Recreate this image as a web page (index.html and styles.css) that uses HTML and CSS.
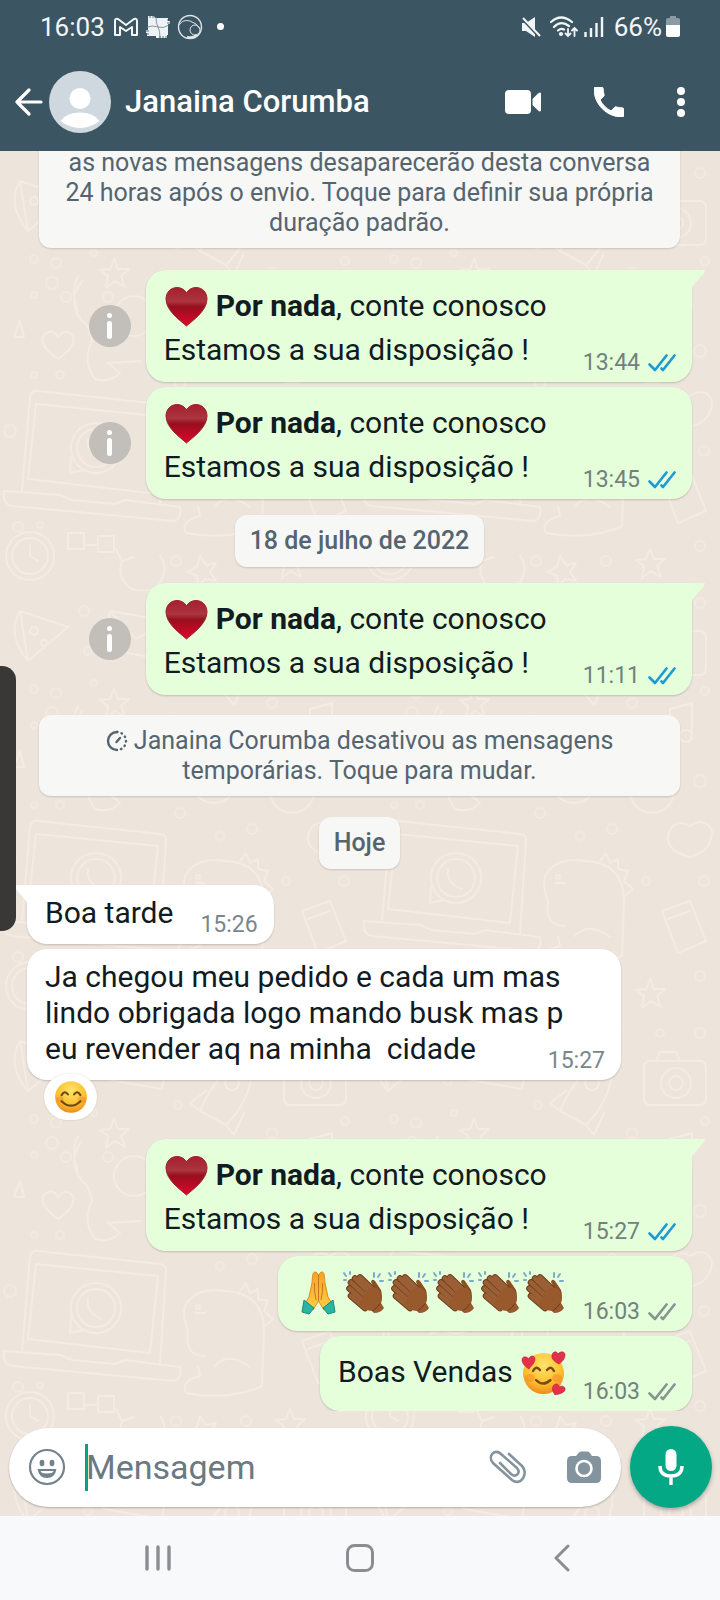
FILE: index.html
```html
<!DOCTYPE html>
<html lang="pt-BR">
<head>
    <meta charset="UTF-8">
    <meta name="viewport" content="width=device-width, initial-scale=1">
    <title>Janaina Corumba</title>
    <link rel="stylesheet" href="styles.css">
</head>
<body>
<!-- shared symbols: ticks and emoji -->
<svg class="defs" aria-hidden="true">
    <defs>
        <linearGradient id="heartFill" x1="0" y1="0" x2="0" y2="1">
            <stop offset="0" stop-color="#a61f2e"/>
            <stop offset="0.36" stop-color="#ab3540"/>
            <stop offset="0.5" stop-color="#970f1e"/>
            <stop offset="1" stop-color="#df062b"/>
        </linearGradient>
        <radialGradient id="faceFill" cx="0.5" cy="0.3" r="0.7">
            <stop offset="0" stop-color="#ffe36b"/>
            <stop offset="0.65" stop-color="#fcc02e"/>
            <stop offset="1" stop-color="#ef8a1c"/>
        </radialGradient>
        <linearGradient id="prayFill" x1="0" y1="0" x2="0" y2="1">
            <stop offset="0" stop-color="#f3a22a"/>
            <stop offset="1" stop-color="#ffd044"/>
        </linearGradient>
        <symbol id="ticks" viewBox="0 0 28 18">
            <path d="M1.500 10.500 L7 16 L18.500 1.500 M13.500 14.500 L15 16 L26.500 1.500" fill="none" stroke="currentColor" stroke-width="2.600" stroke-linecap="round" stroke-linejoin="round"/>
        </symbol>
        <symbol id="heart" viewBox="0 0 45 45">
            <path d="M22.500 42 C17 37 2 27 2 15 C2 8 7 3.500 13 3.500 C17.500 3.500 21 6 22.500 9 C24 6 27.500 3.500 32 3.500 C38 3.500 43 8 43 15 C43 27 28 37 22.500 42 Z" fill="url(#heartFill)" stroke="#9a2630" stroke-width="1"/>
        </symbol>
        <symbol id="pray" viewBox="0 0 45 45">
            <path d="M19 2 C16.500 2 16.500 7 16 13 L13 27 L9 34 L17 40 L22.500 31 L28 40 L36 34 L32 27 L29 13 C28.500 7 28.500 2 26 2 C24 2 23 4 22.500 6 C22 4 21 2 19 2 Z" fill="url(#prayFill)" stroke="#e08a1e" stroke-width="1"/>
            <path d="M22.500 5 V31 M18.500 13 Q18 22 20 30 M26.500 13 Q27 22 25 30" fill="none" stroke="#c9761a" stroke-width="1"/>
            <path d="M8 30 L18 38 L13 44 L6 42 Z M37 30 L27 38 L32 44 L39 42 Z" fill="#29b5a4" stroke="#15897f" stroke-width="1" stroke-linejoin="round"/>
        </symbol>
        <symbol id="clap" viewBox="0 0 45 45">
            <path d="M20 7 L32 16 L30 12 Q31 8 34 11 L40 20 Q42 27 40 33 L33 36 L18 20 Z" fill="#8a4f25"/>
            <g stroke="#6b3a1a" stroke-width="6.600" stroke-linecap="round">
                <path d="M19 7.500 L32 20"/>
                <path d="M14 8.500 L30 24"/>
                <path d="M10 12.500 L28 29"/>
                <path d="M8.500 18.500 L26 34"/>
                <path d="M10 26 L24 38"/>
            </g>
            <g stroke="#9a5f35" stroke-width="4.800" stroke-linecap="round">
                <path d="M19 7.500 L32 20"/>
                <path d="M14 8.500 L30 24"/>
                <path d="M10 12.500 L28 29"/>
                <path d="M8.500 18.500 L26 34"/>
                <path d="M10 26 L24 38"/>
            </g>
            <path d="M24 22 Q32 15 37 19 Q42 25 40 33 L43 38 Q40 43 33 43 L31 41 Q24 41 18 34 Z" fill="#98592c"/>
            <path d="M39 33.500 Q36 38 31.500 41" fill="none" stroke="#6b3a1a" stroke-width="1"/>
            <g stroke="#7fa9cc" stroke-width="2" stroke-linecap="round">
                <path d="M3 3 L5 6 M9 2 L9 4 M3 10 L5 10 M33 3 L33 7 M39 4 L37 7 M42 11 L39 11"/>
            </g>
        </symbol>
        <symbol id="smile" viewBox="0 0 45 45">
            <circle cx="22.500" cy="22.500" r="21" fill="url(#faceFill)"/>
            <ellipse cx="8" cy="26" rx="5" ry="4" fill="#f6852a" opacity="0.5"/>
            <ellipse cx="37" cy="26" rx="5" ry="4" fill="#f6852a" opacity="0.5"/>
            <path d="M10 20 Q14 13 18.500 19 M26.500 19 Q31 13 35 20 M10 28 Q22.500 40 35 28" fill="none" stroke="#6a4a17" stroke-width="2.800" stroke-linecap="round"/>
        </symbol>
        <symbol id="love" viewBox="0 0 45 45">
            <circle cx="22.500" cy="23.500" r="20.500" fill="url(#faceFill)"/>
            <ellipse cx="9" cy="28" rx="5" ry="4" fill="#f6852a" opacity="0.5"/>
            <ellipse cx="36" cy="28" rx="5" ry="4" fill="#f6852a" opacity="0.5"/>
            <path d="M12 21 Q15 15 19 20 M26 20 Q30 15 33 21 M15 30 Q22 37 29.500 30" fill="none" stroke="#7a4a14" stroke-width="2.400" stroke-linecap="round"/>
            <g fill="#e5304a" stroke="#b71c35" stroke-width="0.600">
                <path d="M8 19 C5 17 1 14 1 10 C1 6 6 6 7.500 9 C9 5 14 5 14 9 C14 13 10 16 8 19 Z"/>
                <path d="M38 14 C34 12 30 9 31 5 C32 1 36 1 37 4 C39 1 44 1 44 5 C44 9 41 12 38 14 Z"/>
                <path d="M34 45 C32 42 30 38 33 35 C35 33 38 34 38 37 C41 35 45 37 44 40 C43 43 38 44 34 45 Z"/>
            </g>
        </symbol>
    </defs>
</svg>

<div class="phone">
    <header class="top">
        <div class="status">
            <span class="status-time">16:03</span>
            <svg class="s-mail" viewBox="0 0 24 20" fill="none" stroke="#f3f6f8" stroke-width="2" stroke-linejoin="round"><path d="M1 4 Q1 1 4 2 L12 8 L20 2 Q23 1 23 4 V18 H18 V10 L12 14 L6 10 V18 H1 Z"/></svg>
            <svg class="s-grid" viewBox="0 0 24 24"><path d="M2 1 H8 L9 3 H22 V6 H24 V9 H22 V20 H21 V23 H10 V21 H1 V18 H0 V15 H2 Z" fill="#eef2f4"/><path d="M1 12 Q7 10 12 12 T23 10 M10 2 Q10 9 12 12 T14 23" fill="none" stroke="#6b808b" stroke-width="0.800"/><path d="M4 0 V3 M7 0 V3 M0 16 H3 M0 19 H3 M21 5 H24 M21 8 H24 M14 21 V24 M17 21 V24 M20 21 V24" stroke="#3b5562" stroke-width="0.800"/></svg>
            <svg class="s-orb" viewBox="0 0 26 26" fill="none" stroke="#dfe6ea" stroke-width="1.400"><circle cx="13" cy="13" r="11.500"/><path d="M2 11 Q6 5 13 7 Q20 9 23 15" stroke-width="1"/><circle cx="18" cy="16" r="5" stroke-width="1"/><path d="M10 23 Q15 25 20 21" stroke-width="2.600"/></svg>
            <span class="s-dot"></span>
            <span class="spacer"></span>
            <svg class="s-mute" viewBox="0 0 20 20"><path d="M1 6 H5 L14 0 V20 L5 14 H1 Z" fill="#f3f6f8"/><path d="M0 1 L18 20" stroke="#3b5562" stroke-width="2"/><path d="M2 1 L19 19" stroke="#f3f6f8" stroke-width="2"/></svg>
            <svg class="s-wifi" viewBox="0 0 28 22" fill="none" stroke="#f3f6f8" stroke-width="2.200" stroke-linecap="round"><path d="M1 6 Q11 -3 22 6 M4 11 Q11 4 19 10 M8 14.500 Q11 12 14 13.500"/><circle cx="11" cy="18" r="1" fill="#f3f6f8"/><path d="M18 13 V20 M15.500 17.500 L18 20 L20.500 17.500 M24.500 20 V12 M22 14.500 L24.500 12 L27 14.500" stroke-width="1.800"/></svg>
            <svg class="s-signal" viewBox="0 0 20 20" stroke="#f3f6f8" stroke-width="2.400"><path d="M1.500 15 V20 M7 11 V20 M12.500 6 V20 M18 0 V20"/></svg>
            <span class="status-pct">66%</span>
            <svg class="s-batt" viewBox="0 0 14 22"><path d="M4 0 H10 V2 H12 Q14 2 14 4 V10 H0 V4 Q0 2 2 2 H4 Z" fill="#8b9ba4"/><path d="M0 9 H14 V19 Q14 21 12 21 H2 Q0 21 0 19 Z" fill="#fff"/></svg>
        </div>
        <div class="appbar">
            <button class="icon-btn back" aria-label="Voltar">
                <svg width="28" height="28" viewBox="0 0 28 28" fill="none" stroke="#fff" stroke-width="3.200" stroke-linecap="round" stroke-linejoin="round"><path d="M26 14 H2 M14 2 L2 14 L14 26"/></svg>
            </button>
            <svg class="avatar" viewBox="0 0 62 62"><circle cx="31" cy="31" r="31" fill="#cfd8df"/><circle cx="31" cy="27.500" r="10.500" fill="#fff"/><path d="M11.500 50 Q17 41.500 31 41.500 Q45 41.500 50.500 50 A31 31 0 0 1 11.500 50 Z" fill="#fff"/></svg>
            <h1 class="contact">Janaina Corumba</h1>
            <div class="actions">
                <button class="icon-btn" aria-label="Chamada de vídeo">
                    <svg width="36" height="24" viewBox="0 0 36 24" fill="#fff"><rect width="26" height="24" rx="4"/><path d="M27.500 9 L33 3.500 Q36 1.500 36 4 V20 Q36 22.500 33 20.500 L27.500 15 Z"/></svg>
                </button>
                <button class="icon-btn" aria-label="Ligar">
                    <svg width="30" height="30" viewBox="3 3 18 18" fill="#fff" stroke="#fff" stroke-width="0.600"><path d="M6.620 10.790c1.440 2.830 3.760 5.140 6.590 6.590l2.200-2.200c.27-.27.67-.36 1.020-.24 1.120.37 2.330.57 3.570.57.55 0 1 .45 1 1V20c0 .55-.45 1-1 1-9.390 0-17-7.610-17-17 0-.55.45-1 1-1h3.500c.55 0 1 .45 1 1 0 1.250.2 2.450.57 3.570.11.35.03.74-.25 1.020l-2.200 2.200z"/></svg>
                </button>
                <button class="icon-btn" aria-label="Mais opções">
                    <svg width="8" height="30" viewBox="0 0 8 30" fill="#fff"><circle cx="4" cy="4" r="4"/><circle cx="4" cy="15" r="4"/><circle cx="4" cy="26" r="4"/></svg>
                </button>
            </div>
        </div>
    </header>

    <div class="conversation">
        <svg class="wallpaper" aria-hidden="true">
            <defs>
                <pattern id="doodles" y="10" width="360" height="430" patternUnits="userSpaceOnUse">
                    <g fill="none" stroke="#f4ebe3" stroke-width="2" stroke-linecap="round" stroke-linejoin="round">
                        <!-- laptop -->
                        <path d="M30 236 Q31 229 38 230 L160 243 Q167 244 166 251 L160 342 M30 236 L22 330 M36 243 L158 255 L150 332 L28 318 Z M4 330 L60 334 L72 339 L115 343 L125 339 L180 346 Q182 358 174 360 L12 345 Q2 343 4 330 Z"/>
                        <circle cx="96" cy="287" r="25"/><circle cx="96" cy="287" r="19"/><path d="M88 278 Q86 292 102 298 M71 296 L70 312 L84 309"/>
                        <!-- dino -->
                        <path d="M205 335 Q184 335 188 310 Q180 290 188 280 Q200 266 225 270 Q264 272 264 310 L262 365 Q230 380 186 372 Q180 360 200 355 L198 345 M205 292 L196 292 M240 270 L246 262 L250 272 L258 268 L258 278 L268 280 L264 290 L273 298 L265 305"/><circle cx="198" cy="286" r="2"/><path d="M215 345 Q228 330 250 346"/>
                        <!-- cat -->
                        <path d="M82 120 Q66 140 82 160 Q90 165 92 180 Q82 200 95 218 Q110 222 120 212 L108 202 L140 200 M78 115 Q70 130 78 150"/><circle cx="134" cy="155" r="20"/>
                        <!-- camera -->
                        <rect x="284" y="40" width="62" height="44" rx="6"/><circle cx="316" cy="62" r="15"/><circle cx="316" cy="62" r="7"/><path d="M296 40 L300 31 H316 L320 40"/>
                        <!-- bicycle -->
                        <circle cx="214" cy="190" r="22"/><circle cx="292" cy="200" r="22"/><path d="M214 190 L234 154 L276 160 L292 200 M234 154 L250 192 L276 160 M214 190 L250 192 M228 150 H242 M270 152 L286 154"/>
                        <!-- pizza, envelope, rocket, notes -->
                        <path d="M20 20 L68 36 L28 70 Z M20 20 Q6 44 28 70"/><circle cx="34" cy="40" r="4"/><circle cx="44" cy="52" r="3"/>
                        <path d="M110 20 L168 30 L162 68 L104 58 Z M110 20 L136 48 L168 30"/>
                        <path d="M200 90 Q216 50 252 34 Q256 74 226 104 Z M200 90 L190 82 L206 70 M226 104 L234 114 L244 92"/><circle cx="232" cy="62" r="7"/>
                        <path d="M310 118 V150 M310 118 L332 112 V144"/><circle cx="304" cy="151" r="6"/><circle cx="326" cy="145" r="6"/>
                        <!-- clocks -->
                        <circle cx="30" cy="395" r="24"/><circle cx="30" cy="395" r="18"/><path d="M30 384 V395 L38 400"/>
                        <path d="M122 400 A22 22 0 1 0 160 395 M122 400 L116 388 M122 400 L134 396"/>
                        <rect x="68" y="372" width="16" height="16"/><rect x="98" y="375" width="16" height="16"/><path d="M84 384 H98"/>
                        <path d="M330 235 Q345 225 352 240 Q352 260 330 266 Q306 260 308 244 Q314 226 330 235 Z M302 320 L330 310 L346 350 L318 362 Z M308 328 L330 320"/>
                        <!-- hearts -->
                        <path d="M58 198 Q38 184 44 174 Q52 166 58 176 Q66 166 73 175 Q76 186 58 198 Z M250 18 Q236 8 240 2 Q246 -2 250 5 Q256 -2 260 3 Q262 10 250 18 Z M180 142 Q166 132 170 126 Q176 122 180 129 Q186 122 190 127 Q192 134 180 142 Z"/>
                        <!-- stars -->
                        <path d="M114 98 L118 108 L129 108 L121 115 L125 126 L115 120 L106 127 L108 115 L100 109 L110 108 Z M290 388 L294 398 L305 398 L297 405 L301 416 L291 410 L282 417 L284 405 L276 399 L286 398 Z M20 160 L24 176 L14 176 Z M200 395 L206 404 L216 402 L210 411 L216 420 L205 418 L198 426 L197 415 L187 411 L197 406 Z"/>
                    </g>
                    <g fill="none" stroke="#f3e9df" stroke-width="2">
                        <circle cx="34" cy="98" r="4"/><circle cx="56" cy="102" r="5"/><circle cx="52" cy="122" r="6"/><circle cx="34" cy="134" r="3"/><circle cx="66" cy="136" r="5"/><circle cx="94" cy="92" r="3"/><circle cx="108" cy="136" r="5"/><circle cx="34" cy="214" r="3"/><circle cx="60" cy="214" r="4"/><circle cx="18" cy="366" r="5"/><circle cx="40" cy="364" r="3"/><circle cx="176" cy="400" r="5"/><circle cx="84" cy="20" r="5"/><circle cx="88" cy="60" r="4"/><circle cx="190" cy="20" r="6"/><circle cx="178" cy="84" r="4"/><circle cx="272" cy="112" r="5"/><circle cx="345" cy="100" r="4"/><circle cx="340" cy="190" r="6"/><circle cx="252" cy="238" r="5"/><circle cx="220" cy="245" r="4"/><circle cx="286" cy="290" r="4"/><circle cx="344" cy="290" r="5"/><circle cx="340" cy="385" r="5"/><circle cx="246" cy="400" r="5"/><circle cx="10" cy="270" r="6"/><circle cx="180" cy="222" r="5"/><circle cx="340" cy="12" r="5"/><circle cx="300" cy="12" r="4"/>
                    </g>
                </pattern>
            </defs>
            <rect width="100%" height="100%" fill="url(#doodles)"/>
        </svg>

        <main class="chat">
            <div class="notice">as novas mensagens desaparecerão desta conversa 24 horas após o envio. Toque para definir sua própria duração padrão.</div>

            <div class="row sent first">
                <button class="info" aria-label="Informações"></button>
                <div class="bubble tail">
                    <div class="text">
                        <p class="line"><svg class="emoji"><use href="#heart"/></svg><span class="after"><b>Por nada</b>, conte conosco</span></p>
                        <p>Estamos a sua disposição !</p>
                    </div>
                    <span class="meta">13:44 <svg class="ticks read"><use href="#ticks"/></svg></span>
                </div>
            </div>
            <div class="row sent">
                <button class="info" aria-label="Informações"></button>
                <div class="bubble">
                    <div class="text">
                        <p class="line"><svg class="emoji"><use href="#heart"/></svg><span class="after"><b>Por nada</b>, conte conosco</span></p>
                        <p>Estamos a sua disposição !</p>
                    </div>
                    <span class="meta">13:45 <svg class="ticks read"><use href="#ticks"/></svg></span>
                </div>
            </div>

            <div class="date">18 de julho de 2022</div>

            <div class="row sent first">
                <button class="info" aria-label="Informações"></button>
                <div class="bubble tail">
                    <div class="text">
                        <p class="line"><svg class="emoji"><use href="#heart"/></svg><span class="after"><b>Por nada</b>, conte conosco</span></p>
                        <p>Estamos a sua disposição !</p>
                    </div>
                    <span class="meta">11:11 <svg class="ticks read"><use href="#ticks"/></svg></span>
                </div>
            </div>

            <div class="notice spaced"><svg class="timer" viewBox="0 0 22 22" fill="none" stroke="#54656f" stroke-width="2.400" stroke-linecap="round"><path d="M11 2 A9 9 0 0 0 11 20"/><path d="M11 2 A9 9 0 0 1 11 20" stroke-dasharray="0.500 4.200"/><path d="M10.500 12 L14 8"/></svg> Janaina Corumba desativou as mensagens temporárias. Toque para mudar.</div>

            <div class="date today">Hoje</div>

            <div class="row received first">
                <div class="bubble tail">
                    <p class="text">Boa tarde</p>
                    <span class="meta">15:26</span>
                </div>
            </div>
            <div class="row received reacted">
                <div class="bubble long">
                    <p class="words">Ja chegou meu pedido e cada um mas lindo obrigada logo mando busk mas p eu revender aq na minha&nbsp; cidade<span class="meta">15:27</span></p>
                    <button class="reaction" aria-label="Reação"><svg><use href="#smile"/></svg></button>
                </div>
            </div>

            <div class="row sent">
                <div class="bubble tail">
                    <div class="text">
                        <p class="line"><svg class="emoji"><use href="#heart"/></svg><span class="after"><b>Por nada</b>, conte conosco</span></p>
                        <p>Estamos a sua disposição !</p>
                    </div>
                    <span class="meta">15:27 <svg class="ticks read"><use href="#ticks"/></svg></span>
                </div>
            </div>
            <div class="row sent">
                <div class="bubble">
                    <p class="line"><svg class="emoji"><use href="#pray"/></svg><svg class="emoji"><use href="#clap"/></svg><svg class="emoji"><use href="#clap"/></svg><svg class="emoji"><use href="#clap"/></svg><svg class="emoji"><use href="#clap"/></svg><svg class="emoji"><use href="#clap"/></svg></p>
                    <span class="meta">16:03 <svg class="ticks"><use href="#ticks"/></svg></span>
                </div>
            </div>
            <div class="row sent">
                <div class="bubble">
                    <p class="line"><span class="before">Boas Vendas</span><svg class="emoji"><use href="#love"/></svg></p>
                    <span class="meta">16:03 <svg class="ticks"><use href="#ticks"/></svg></span>
                </div>
            </div>
        </main>

        <form class="composer">
            <div class="field">
                <button type="button" class="icon-btn" aria-label="Emoji">
                    <svg width="38" height="38" viewBox="0 0 38 38"><circle cx="19" cy="19" r="17" fill="none" stroke="#72838d" stroke-width="2.200"/><ellipse cx="14" cy="15" rx="2.400" ry="3.200" fill="#72838d"/><ellipse cx="24" cy="15" rx="2.400" ry="3.200" fill="#72838d"/><path d="M9.500 21 H28.500 Q27 30 19 30 Q11 30 9.500 21 Z" fill="#72838d"/><path d="M12.500 23 H25.500 Q25 25.500 19 25.500 Q13 25.500 12.500 23 Z" fill="#fff"/></svg>
                </button>
                <span class="caret"></span>
                <input class="message" type="text" placeholder="Mensagem" aria-label="Mensagem">
                <button type="button" class="icon-btn" aria-label="Anexar">
                    <svg width="38" height="34" viewBox="0 0 38 34" fill="none" stroke="#84939c" stroke-width="2.600" stroke-linecap="round" stroke-linejoin="round"><path d="M20 4 L33 16 C40 23 32 37 23 30 L4 13 C-2 6 6 -2 12 4 L28 18 C32 23 27 28 22 24 L11 13"/></svg>
                </button>
                <button type="button" class="icon-btn" aria-label="Câmera">
                    <svg width="34" height="32" viewBox="0 0 34 32"><path d="M5 5 H9 L12 1.500 Q13 0.500 14.500 0.500 H20 Q21.500 0.500 22.500 1.500 L25 5 H29 Q34 5 34 10 V27 Q34 32 29 32 H5 Q0 32 0 27 V10 Q0 5 5 5 Z" fill="#84949f"/><circle cx="17" cy="17.500" r="7.500" fill="none" stroke="#fff" stroke-width="2.600"/></svg>
                </button>
            </div>
            <button type="button" class="mic" aria-label="Gravar áudio">
                <svg width="26" height="36" viewBox="0 0 26 36"><rect x="7.500" y="0" width="11" height="22" rx="5.500" fill="#fff"/><path d="M2 17 Q2 27 13 27 Q24 27 24 17 M13 27 V36" fill="none" stroke="#fff" stroke-width="3.400"/></svg>
            </button>
        </form>
    </div>

    <nav class="sysnav">
        <button aria-label="Recentes"><svg width="26" height="26" viewBox="0 0 26 26" stroke="#8b8d90" stroke-width="3.400" stroke-linecap="round"><path d="M2 2 V24 M13 2 V24 M24 2 V24"/></svg></button>
        <button aria-label="Início"><svg width="28" height="28" viewBox="0 0 28 28" fill="none" stroke="#8b8d90" stroke-width="3"><rect x="1.500" y="1.500" width="25" height="25" rx="7"/></svg></button>
        <button aria-label="Voltar"><svg width="16" height="28" viewBox="0 0 16 28" fill="none" stroke="#8b8d90" stroke-width="3" stroke-linecap="round" stroke-linejoin="round"><path d="M14 2 L2 14 L14 26"/></svg></button>
    </nav>
    <div class="edge-handle"></div>
</div>
</body>
</html>
```
FILE: styles.css
```css
* {
    box-sizing: border-box;
}

body {
    margin: 0;
    font-family: Roboto, "Noto Sans", sans-serif;
    color: #111b21;
}

p, h1 {
    margin: 0;
}

button {
    padding: 0;
    border: 0;
    background: none;
    display: flex;
    align-items: center;
    justify-content: center;
}

svg {
    display: block;
    flex-shrink: 0;
}

.defs {
    position: absolute;
    width: 0;
    height: 0;
}

.phone {
    position: relative;
    display: flex;
    flex-direction: column;
    height: 100vh;
    overflow: hidden;
}

/* header */
.top {
    background: #3b5562;
    color: #fff;
}

.status {
    display: flex;
    align-items: center;
    height: 53px;
    padding: 0 40px;
    font-size: 26px;
    line-height: 30px;
    color: #f3f6f8;
}

.spacer {
    flex: 1;
}

.s-mail { width: 24px; height: 20px; margin-left: 9px; }
.s-grid { width: 24px; height: 24px; margin-left: 8px; }
.s-orb { width: 26px; height: 26px; margin-left: 7px; }
.s-dot { width: 7px; height: 7px; margin-left: 14px; border-radius: 50%; background: #fff; }
.s-mute { width: 20px; height: 20px; }
.s-wifi { width: 28px; height: 22px; margin-left: 9px; }
.s-signal { width: 20px; height: 20px; margin: 0 10px 0 6px; }
.s-batt { width: 14px; height: 22px; margin-left: 4px; }

.appbar {
    display: flex;
    align-items: center;
    height: 98px;
    padding: 0 35px 0 15px;
}

.avatar {
    width: 62px;
    height: 62px;
    margin-left: 6px;
}

.contact {
    flex: 1;
    margin-left: 14px;
    font-size: 31px;
    line-height: 36px;
    font-weight: 500;
}

.actions {
    display: flex;
    align-items: center;
    gap: 53px;
}

/* conversation */
.conversation {
    position: relative;
    flex: 1;
    min-height: 0;
    display: flex;
    flex-direction: column;
    background: #ede4dc;
}

.wallpaper {
    position: absolute;
    top: 0;
    left: 0;
    width: 100%;
    height: 100%;
}

.chat {
    position: relative;
    flex: 1;
    min-height: 0;
    display: flex;
    flex-direction: column;
    justify-content: flex-end;
    overflow: hidden;
    padding: 0 28px 0 27px;
}

.notice, .date {
    flex-shrink: 0;
    background: #f7f7f6;
    color: #54656f;
    font-size: 25px;
    text-align: center;
    border-radius: 12px;
    box-shadow: 0 1px 2px rgba(0, 0, 0, 0.15);
}

.notice {
    margin: 0 12px;
    padding: 10px 24px;
    line-height: 30px;
}

.notice.spaced {
    margin-top: 20px;
    padding: 11px 60px 10px;
}

.timer {
    display: inline-block;
    width: 22px;
    height: 22px;
    vertical-align: -3px;
}

.date {
    align-self: center;
    margin-top: 16px;
    padding: 12px 15px;
    line-height: 28px;
    font-weight: 500;
}

.date.today {
    margin-top: 21px;
}

.row {
    flex-shrink: 0;
    display: flex;
    align-items: center;
    margin-top: 5px;
}

.row.first {
    margin-top: 16px;
}

.notice + .row.first {
    margin-top: 22px;
}

.row.sent {
    justify-content: flex-end;
}

.row.reacted {
    margin-bottom: 54px;
}

.info {
    width: 42px;
    height: 42px;
    margin-right: 15px;
    flex-direction: column;
    gap: 3px;
    border-radius: 50%;
    background: #c2bfba;
}

.info::before {
    content: "";
    width: 5px;
    height: 5px;
    border-radius: 50%;
    background: #fff;
}

.info::after {
    content: "";
    width: 5px;
    height: 18px;
    border-radius: 3px;
    background: #fff;
}

.bubble {
    position: relative;
    display: flex;
    align-items: flex-end;
    gap: 17px;
    padding: 10px 16px 13px 18px;
    border-radius: 20px;
    background: #fff;
    font-size: 30px;
    line-height: 36px;
    box-shadow: 0 1px 2px rgba(0, 0, 0, 0.18);
}

.sent .bubble {
    background: #e5ffda;
}

.sent .tail {
    border-top-right-radius: 0;
}

.received .tail {
    border-top-left-radius: 0;
}

.tail::before {
    content: "";
    position: absolute;
    top: 0;
    width: 13px;
    height: 18px;
}

.sent .tail::before {
    left: 100%;
    background: #e5ffda;
    clip-path: polygon(0 0, 100% 0, 90% 20%, 10% 85%, 0 100%);
}

.received .tail::before {
    right: 100%;
    background: #fff;
    clip-path: polygon(100% 0, 0 0, 10% 20%, 90% 85%, 100% 100%);
}

.text {
    padding-right: 10px;
}

.sent .text {
    padding: 0 19px 1px 0;
}

.line {
    display: flex;
    align-items: center;
    min-height: 52px;
}

.after {
    margin-left: 7px;
}

.before {
    margin-right: 8px;
}

.emoji {
    width: 45px;
    height: 45px;
}

.meta {
    display: flex;
    align-items: center;
    gap: 8px;
    margin-bottom: -6px;
    font-size: 23px;
    line-height: 24px;
    color: #71827c;
}

.received .meta {
    color: #7a868d;
}

.ticks {
    width: 28px;
    height: 18px;
    color: #85958f;
}

.ticks.read {
    color: #1c9ad6;
}

.long {
    display: block;
    max-width: 594px;
}

/* keeps the words clear of the time in the corner */
.words {
    padding-right: 24px;
}

.long .meta {
    float: right;
    margin: 18px -24px -12px 0;
}

.reaction {
    position: absolute;
    left: 17px;
    top: 100%;
    margin-top: -6px;
    width: 53px;
    height: 46px;
    border-radius: 23px;
    background: #fff;
    box-shadow: 0 0 2px rgba(0, 0, 0, 0.15);
}

.reaction svg {
    width: 34px;
    height: 34px;
}

/* composer */
.composer {
    position: relative;
    display: flex;
    align-items: center;
    gap: 9px;
    padding: 15px 8px 8px 9px;
}

.field {
    flex: 1;
    min-width: 0;
    display: flex;
    align-items: center;
    height: 79px;
    padding: 0 20px 0 19px;
    border-radius: 40px;
    background: #fff;
    box-shadow: 0 1px 2px rgba(0, 0, 0, 0.25);
}

.caret {
    width: 3px;
    height: 47px;
    margin-left: 19px;
    margin-right: -2px;
    background: #0f9f80;
}

.message {
    flex: 1;
    min-width: 0;
    padding: 0;
    border: 0;
    outline: 0;
    background: none;
    font-family: inherit;
    font-size: 34px;
    line-height: 40px;
    color: #111b21;
}

.message::placeholder {
    color: #6b7981;
    opacity: 1;
}

.field .icon-btn:last-child {
    margin-left: 40px;
}

.mic {
    width: 82px;
    height: 82px;
    border-radius: 50%;
    background: #05a884;
    box-shadow: 0 2px 4px rgba(0, 0, 0, 0.3);
}

/* android navigation */
.sysnav {
    display: flex;
    height: 84px;
    padding: 0 57px;
    background: #f7f9fb;
}

.sysnav button {
    flex: 1;
}

.edge-handle {
    position: absolute;
    left: 0;
    top: 666px;
    width: 16px;
    height: 265px;
    border-radius: 0 14px 14px 0;
    background: #3a3836;
}
```
